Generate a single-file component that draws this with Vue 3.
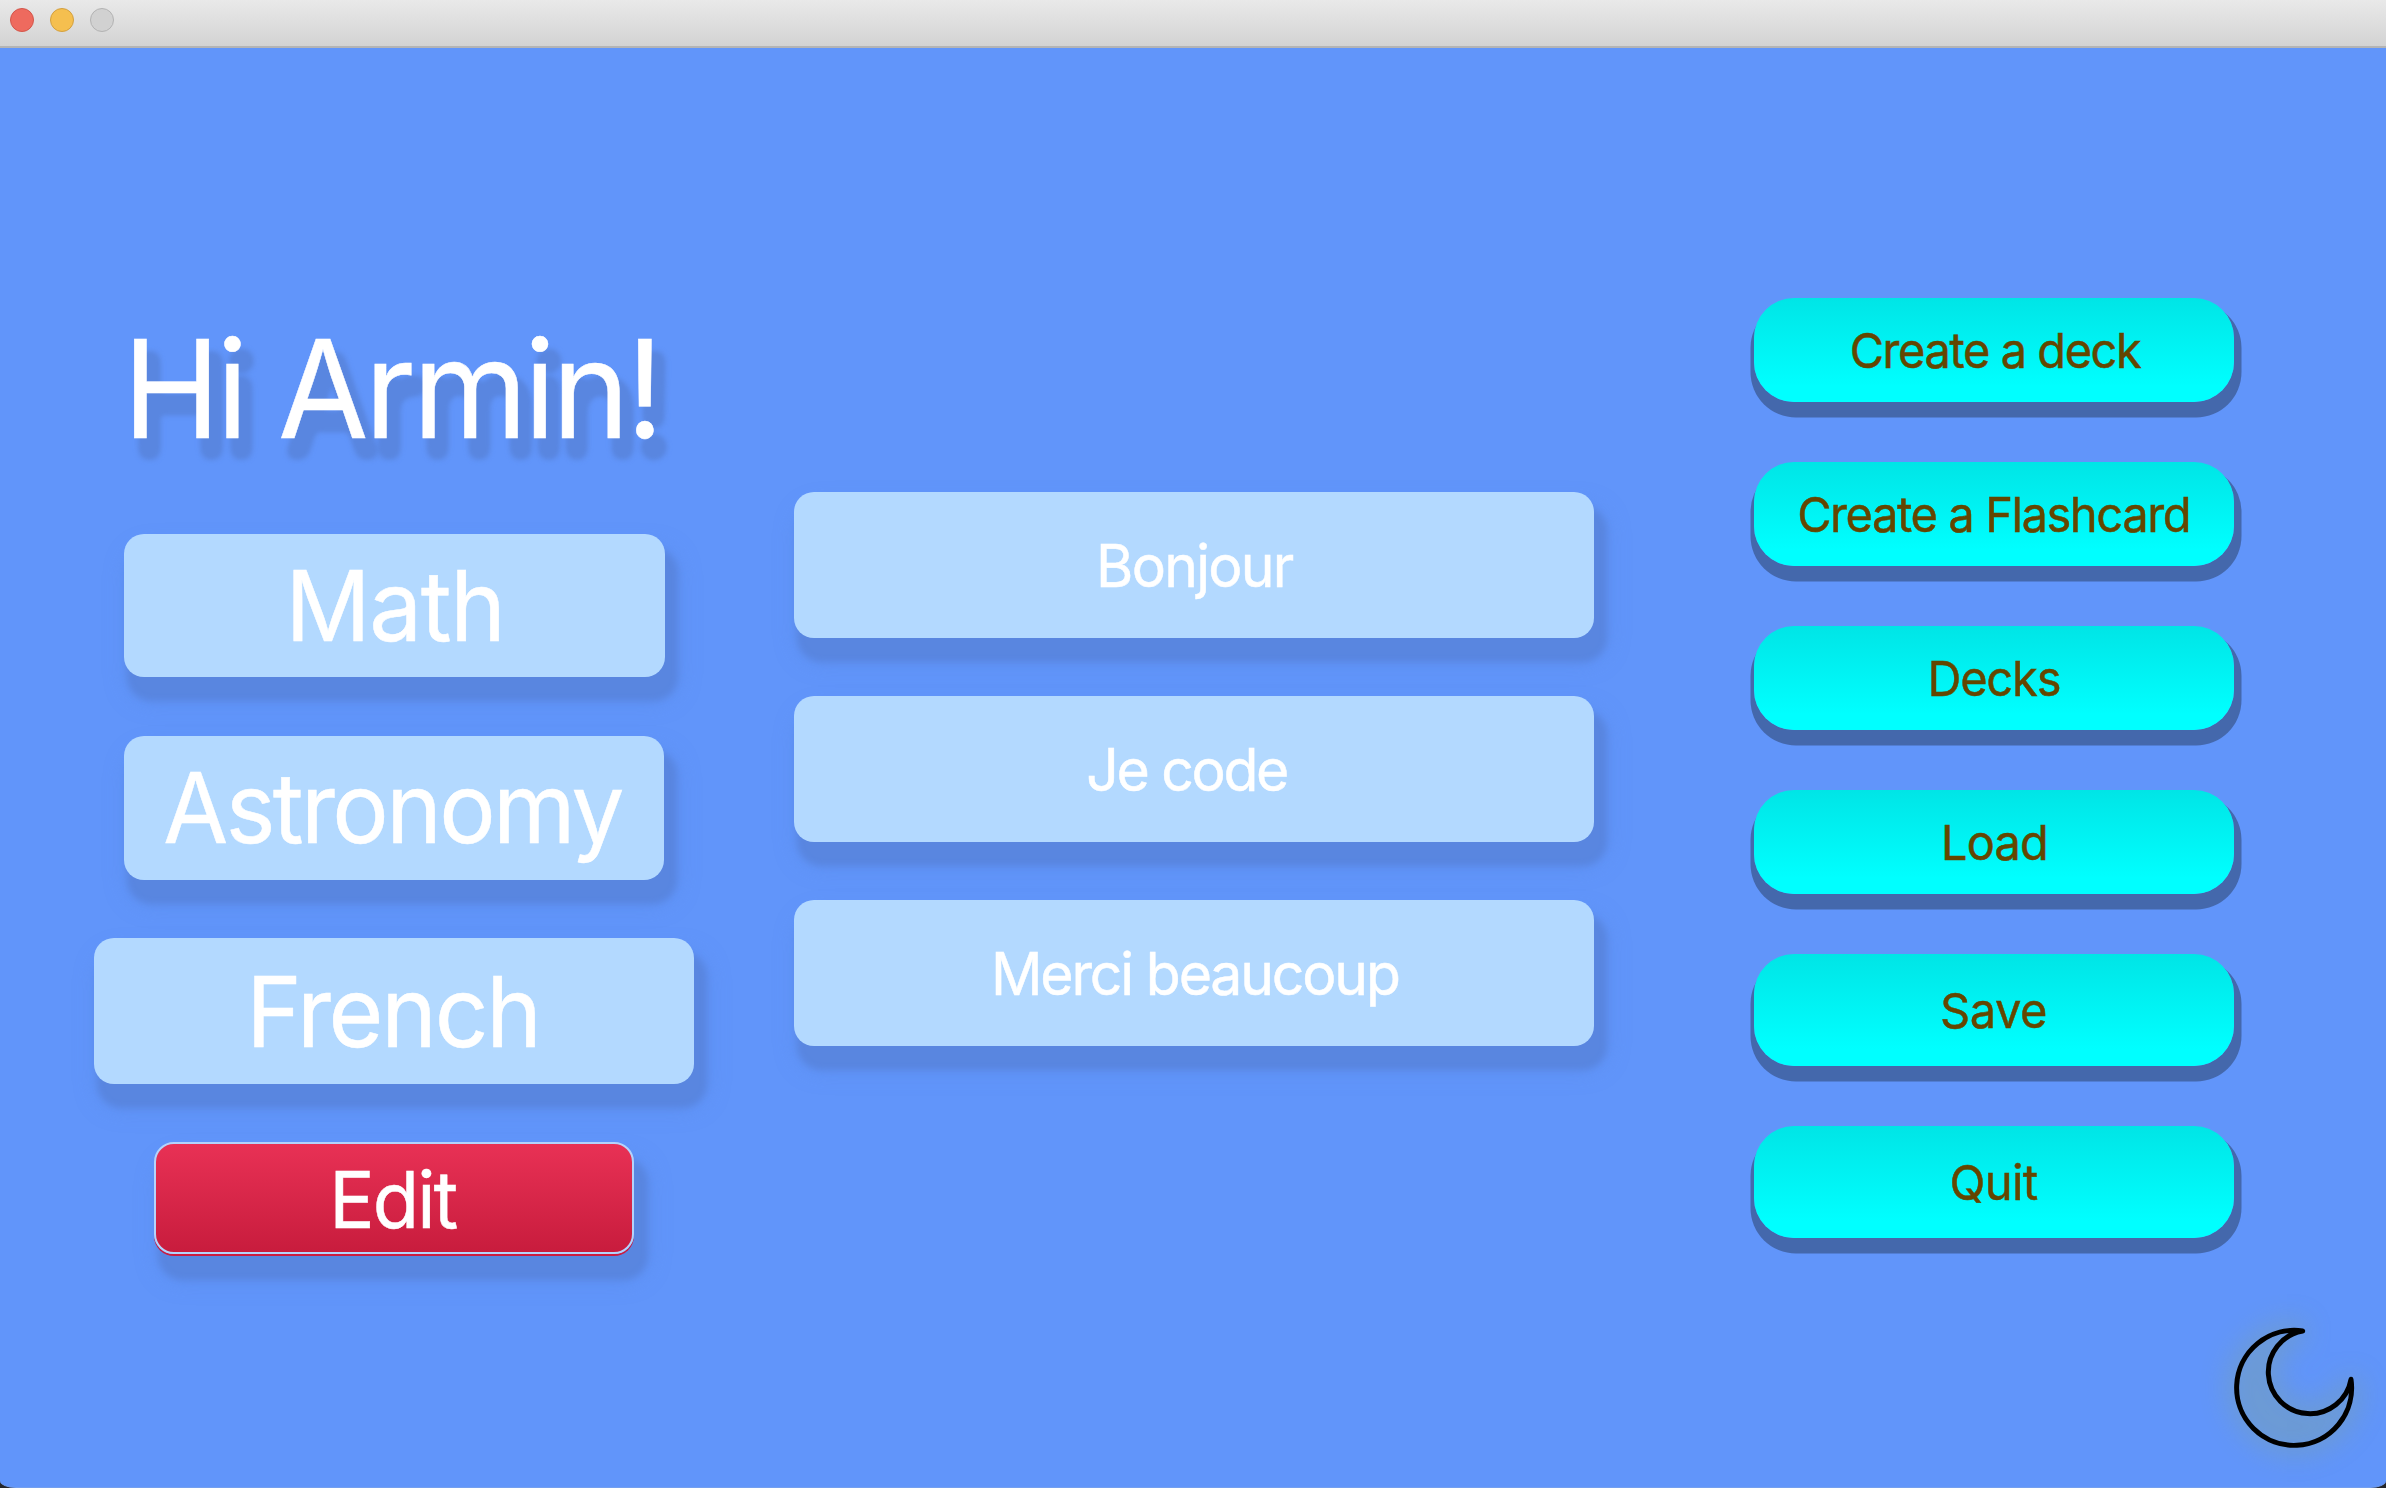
<script setup>
const decks = [
  { label: 'Math', spacing: -1.4, shift: 1.5, size: 'math' },
  { label: 'Astronomy', spacing: -2.7, size: 'astronomy' },
  { label: 'French', spacing: -2.3, size: 'french' },
]
const cards = [
  { label: 'Bonjour', spacing: -1.8, shift: 1.5 },
  { label: 'Je code', spacing: -2.4, shift: -6.5 },
  { label: 'Merci beaucoup', spacing: -2.25, shift: 1.5 },
]
const actions = [
  { label: 'Create a deck', spacing: -1.45, shift: 1.5 },
  { label: 'Create a Flashcard', spacing: -1.4 },
  { label: 'Decks', spacing: -1.15 },
  { label: 'Load', spacing: -0.8, shift: 1 },
  { label: 'Save', spacing: -0.4, tall: true },
  { label: 'Quit', spacing: -0.6, tall: true },
]
const track = (spacing, shift = 0) => ({ '--track': spacing + 'px', '--shift': shift + 'px' })
</script>

<template>
  <div class="backdrop">
    <div class="window">
      <header class="titlebar">
        <span class="dot close"></span>
        <span class="dot minimize"></span>
        <span class="dot zoom"></span>
      </header>

      <main class="content">
        <section class="left">
          <h1 class="greeting"><span class="label" :style="track(-3.8, -1)">Hi Armin!</span></h1>
          <button v-for="d in decks" :key="d.label" class="card deck" :class="d.size">
            <span class="label" :style="track(d.spacing, d.shift)">{{ d.label }}</span>
          </button>
          <button class="edit"><span class="label" :style="track(-2)">Edit</span></button>
        </section>

        <section class="middle">
          <button v-for="c in cards" :key="c.label" class="card flash">
            <span class="label" :style="track(c.spacing, c.shift)">{{ c.label }}</span>
          </button>
        </section>

        <nav class="right">
          <button v-for="a in actions" :key="a.label" class="action" :class="{ tall: a.tall }">
            <span class="label" :style="track(a.spacing, a.shift)">{{ a.label }}</span>
          </button>
        </nav>
      </main>

      <svg class="moon" viewBox="0 0 618 624" width="206" height="208">
        <defs>
          <filter id="glow" x="-50%" y="-50%" width="200%" height="200%">
            <feGaussianBlur stdDeviation="42" />
          </filter>
        </defs>
        <path
          d="M373 153A172.500 172.500 0 1 0 513 293A125 125 0 1 1 373 153Z"
          fill="#86a880" stroke="#86a880" stroke-width="60" opacity=".3" filter="url(#glow)"
        />
        <path
          d="M368 153A172.500 172.500 0 1 0 513 298A125 125 0 1 1 368 153Z"
          fill="none" stroke="#000" stroke-width="15" stroke-linejoin="round"
        />
      </svg>
    </div>

    <svg class="defs" width="0" height="0">
      <filter id="soft-shadow" x="-10%" y="-20%" width="125%" height="160%" color-interpolation-filters="sRGB">
        <feGaussianBlur in="SourceAlpha" stdDeviation="5" />
        <feComponentTransfer><feFuncA type="linear" slope="4.200" intercept="-0.100" /></feComponentTransfer>
        <feOffset dx="9" dy="17" result="shape" />
        <feFlood flood-color="#5986e0" />
        <feComposite in2="shape" operator="in" result="shadow" />
        <feGaussianBlur in="shadow" stdDeviation="1.500" result="softened" />
        <feMerge>
          <feMergeNode in="softened" />
          <feMergeNode in="SourceGraphic" />
        </feMerge>
      </filter>
    </svg>
  </div>
</template>

<style>
body {
  margin: 0;
  overflow: hidden;
}
</style>

<style scoped>
.backdrop {
  width: 2386px;
  height: 1488px;
  background: #25262a;
  overflow: hidden;
  position: relative;
  font-family: Inter, 'Liberation Sans', sans-serif;
}
.window {
  display: flex;
  flex-direction: column;
  position: relative;
  height: 1488px;
  box-sizing: border-box;
  background: #6195fa;
  border-bottom: 1px solid #749fee;
  border-radius: 0 0 16px 16px / 0 0 7px 7px;
  overflow: hidden;
}
.titlebar {
  display: flex;
  align-items: flex-start;
  gap: 16px;
  flex: none;
  height: 48px;
  box-sizing: border-box;
  padding: 8px 10px;
  background: linear-gradient(#e9e9e9, #d3d3d3);
  border-bottom: 2px solid #b4b4b4;
}
.dot {
  width: 24px;
  height: 24px;
  box-sizing: border-box;
  border-radius: 50%;
}
.close {
  background: #ee6a5e;
  border: 1px solid #d3564b;
}
.minimize {
  background: #f5bf4f;
  border: 1px solid #d3a03f;
}
.zoom {
  background: #d1d1d1;
  border: 1px solid #b3b3b3;
}
.content {
  display: flex;
  align-items: flex-start;
  padding-left: 94px;
}
.left {
  display: flex;
  flex-direction: column;
  align-items: center;
  width: 600px;
  margin-right: 100px;
  padding-top: 269px;
}
.middle {
  display: flex;
  flex-direction: column;
  gap: 58px;
  width: 800px;
  margin-right: 160px;
  padding-top: 444px;
}
.right {
  display: flex;
  flex-direction: column;
  gap: 60px;
  width: 480px;
  padding-top: 250px;
}
button {
  display: flex;
  align-items: center;
  justify-content: center;
  flex: none;
  box-sizing: border-box;
  margin: 0;
  padding: 0;
  border: 0;
  font-family: inherit;
  white-space: nowrap;
}
.label {
  display: inline-block;
  letter-spacing: var(--track);
  margin-right: calc(-1 * var(--track));
  transform: translateX(var(--shift)) scaleX(0.965);
  -webkit-text-stroke: 0.5px currentColor;
}
.greeting {
  margin: 0 0 73.500px;
  height: 143px;
  line-height: 143px;
  font-size: 136px;
  font-weight: 400;
  white-space: nowrap;
  color: #fff;
  filter: url(#soft-shadow);
}
.card {
  color: #fff;
  background: #b3d9ff;
  border-radius: 20px;
  box-shadow:
    8px 19px 6px 5px #5986e0,
    8px 19px 22px 6px rgba(89, 134, 224, 0.35);
}
.deck {
  font-size: 97.600px;
}
.math {
  width: 541px;
  height: 143px;
  margin-bottom: 59.500px;
}
.astronomy {
  width: 540px;
  height: 144px;
  margin-bottom: 58px;
  padding-bottom: 2px;
}
.french {
  width: 600px;
  height: 146px;
  margin-bottom: 58px;
}
.edit {
  width: 480px;
  height: 112px;
  padding-top: 3px;
  border: 2px solid #b4d3fb;
  border-radius: 20px;
  background: linear-gradient(#e83155, #c81c3d);
  color: #fff;
  font-size: 78.400px;
  box-shadow:
    0 2px 0 #cc1c40,
    9px 21px 6px 5px #5986e0,
    9px 21px 22px 6px rgba(89, 134, 224, 0.35);
}
.flash {
  width: 800px;
  height: 146px;
  font-size: 59.200px;
}
.action {
  width: 480px;
  height: 104px;
  border-radius: 40px;
  background: linear-gradient(#00e5e6, #00ffff 85%);
  color: #644600;
  font-size: 48.600px;
  box-shadow: 2px 10px 0 5.500px #4468ac;
}
.tall {
  height: 112px;
}
.moon {
  position: absolute;
  right: 0;
  bottom: -1px;
}
.defs {
  position: absolute;
}
</style>
